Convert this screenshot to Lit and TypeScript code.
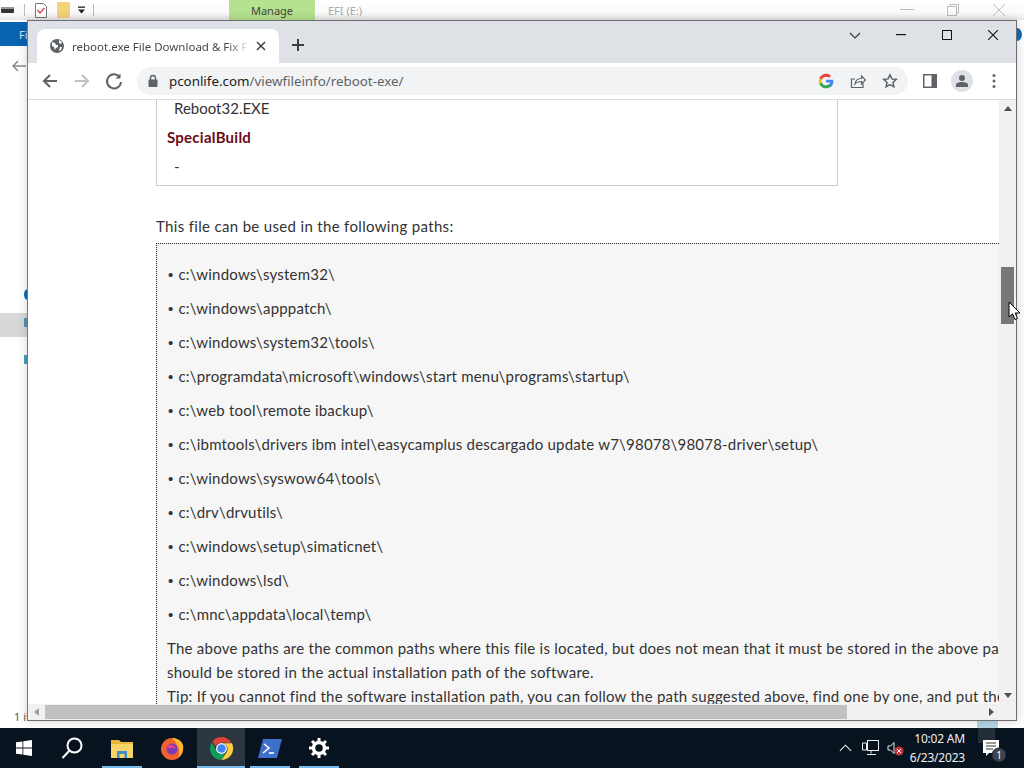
import { LitElement, html, css, svg } from "lit";
import { customElement } from "lit/decorators.js";

const PATHS = [
  "c:\\windows\\system32\\",
  "c:\\windows\\apppatch\\",
  "c:\\windows\\system32\\tools\\",
  "c:\\programdata\\microsoft\\windows\\start menu\\programs\\startup\\",
  "c:\\web tool\\remote ibackup\\",
  "c:\\ibmtools\\drivers ibm intel\\easycamplus descargado update w7\\98078\\98078-driver\\setup\\",
  "c:\\windows\\syswow64\\tools\\",
  "c:\\drv\\drvutils\\",
  "c:\\windows\\setup\\simaticnet\\",
  "c:\\windows\\lsd\\",
  "c:\\mnc\\appdata\\local\\temp\\",
];

@customElement("app-root")
export class AppRoot extends LitElement {
  static styles = css`
    :host { display: flex; flex-direction: column; width: 1024px; height: 768px; overflow: hidden; position: relative; background: #fff; font-family: "Lato", "Noto Sans", sans-serif; }
    svg { display: block; flex: none; }

    /* desktop: window behind */
    .desktop { flex: none; height: 728px; position: relative; background: #fff; }
    .back { position: absolute; inset: 0; background: #fff; font-family: "Noto Sans", sans-serif; }
    .back-title { height: 20px; display: flex; align-items: center; background: linear-gradient(#fff, #fafafa 70%, #e8e8e8); color: #9a9a9a; font-size: 11px; }
    .qa { display: flex; align-items: center; gap: 10px; width: 229px; padding-left: 1px; box-sizing: border-box; }
    .sep { width: 1px; height: 12px; background: #bbb; }
    .tight { margin-left: -2px; }
    .manage { width: 86px; height: 20px; background: #b5e28e; color: #444; display: flex; align-items: center; justify-content: center; }
    .efi { margin-left: 13px; flex: 1; color: #aaa; }
    .caps { display: flex; gap: 33px; padding-right: 18px; align-items: center; }
    .file { position: absolute; left: 0; top: 22px; width: 40px; height: 24px; background: #0a64b4; color: #cfe3f5; font-size: 11px; padding: 5px 0 0 19px; box-sizing: border-box; }
    .backarrow { position: absolute; left: 12px; top: 60px; }
    .sel { position: absolute; left: 0; top: 313px; width: 28px; height: 24px; background: #d8d8d8; }
    .dot { position: absolute; left: 24px; top: 289px; width: 8px; height: 11px; border-radius: 50%; background: #0f6cb5; }
    .sq { position: absolute; left: 24px; width: 6px; height: 9px; background: #5a8fb0; }
    .sq.a { top: 318px; }
    .sq.b { top: 355px; background: #4aa0b8; }
    .items { position: absolute; left: 14px; top: 709px; font-size: 11px; color: #555; }
    .rdot { position: absolute; left: 1012px; top: 28px; width: 10px; height: 13px; border-radius: 50%; background: #0f6cb5; }
    .tealbox { position: absolute; left: 977px; top: 720px; width: 21px; height: 8px; background: #b5d6e4; }

    /* chrome window */
    .win { position: absolute; left: 27px; top: 20px; width: 990px; height: 701px; box-sizing: border-box; border: 1px solid #6e6e6e; border-left-color: #777; display: flex; flex-direction: column; background: #fff; box-shadow: 0 0 10px rgba(0,0,0,.18); font-family: "Noto Sans", sans-serif; }
    .strip { flex: none; height: 42px; background: #dee1e6; display: flex; align-items: flex-end; padding-left: 9px; }
    .tab { width: 242px; height: 34px; background: #fff; border-radius: 8px 8px 0 0; display: flex; align-items: center; padding: 0 13px 0 12px; box-sizing: border-box; gap: 7px; }
    .tab-title { flex: 1; font-size: 11.5px; color: #45474a; white-space: nowrap; overflow: hidden; -webkit-mask-image: linear-gradient(to right, #000 88%, transparent); mask-image: linear-gradient(to right, #000 88%, transparent); }
    .newtab { margin: 0 0 12px 13px; }
    .winctl { margin-left: auto; align-self: flex-start; display: flex; align-items: center; height: 28px; }
    .wc { width: 46px; display: flex; justify-content: center; }
    .toolbar { flex: none; height: 36px; background: #fff; border-bottom: 1px solid #dadce0; display: flex; align-items: center; padding-left: 12px; }
    .nav { display: flex; gap: 12px; }
    .omni { margin-left: 13px; width: 771px; height: 28px; border-radius: 14px; background: #f1f3f4; display: flex; align-items: center; padding: 0 10px 0 10px; box-sizing: border-box; }
    .url { margin-left: 10px; font-size: 13.35px; color: #5f6368; flex: 1; white-space: nowrap; }
    .url b { font-weight: 400; color: #202124; }
    .omni-r { display: flex; align-items: center; gap: 16px; }
    .tool-r { display: flex; align-items: center; gap: 11px; margin-left: 15px; }
    .avatar { width: 22px; height: 22px; border-radius: 50%; background: #dee1e6; display: flex; align-items: center; justify-content: center; margin-left: 3px; }

    .view { flex: 1; min-height: 0; display: grid; grid-template-columns: 1fr 17px; grid-template-rows: 1fr 16px; }
    .page { overflow: hidden; background: #fff; padding-left: 128px; font-family: "Lato", "Noto Sans", sans-serif; font-size: 15px; letter-spacing: .25px; color: #333; min-width: 0; }
    .props { width: 682px; height: 86px; box-sizing: border-box; border: 1px solid #ccc; border-top: 0; padding-left: 10px; }
    .pv { height: 29px; line-height: 17px; padding-left: 7px; color: #333; letter-spacing: 0; }
    .pk { height: 29px; line-height: 17px; color: #6a0a14; font-weight: 700; }
    .used { margin: 29px 0 0; height: 28px; line-height: 22px; letter-spacing: .33px; }
    .list { border-top: 1px dotted #222; border-left: 1px dotted #222; background: #f6f6f6; padding: 13px 0 0 10px; white-space: nowrap; overflow: hidden; height: 461px; box-sizing: border-box; }
    .li { height: 34px; line-height: 34px; letter-spacing: .2px; }
    .li::before { content: "•"; font-family: "Liberation Sans", sans-serif; margin: 0 5px 0 1px; }
    .para { line-height: 24px; margin-top: 5px; }

    .vs { background: #f1f1f1; display: flex; flex-direction: column; align-items: center; }
    .hs { background: #f1f1f1; display: flex; align-items: center; padding: 0 2px; }
    .corner { background: #f1f1f1; }
    .arrow { width: 0; height: 0; border: 4px solid transparent; }
    .up { border-top: 0; border-bottom: 5px solid #505050; margin-top: 6px; }
    .down { border-bottom: 0; border-top: 5px solid #505050; margin-bottom: 6px; margin-top: auto; }
    .left { border-left: 0; border-right: 5px solid #a0a0a0; margin-left: 4px; }
    .right { border-right: 0; border-left: 5px solid #505050; margin-right: 3px; margin-left: auto; }
    .vthumb { width: 13px; height: 57px; background: #787878; margin-top: 156px; }
    .hthumb { width: 802px; height: 14px; background: #c1c1c1; margin-left: 6px; }
    .cursor { position: absolute; left: 1008px; top: 301px; }

    /* taskbar */
    .taskbar { flex: none; height: 40px; background: #07131f; display: flex; align-items: center; color: #fff; position: relative; }
    .tb { width: 48px; height: 40px; display: flex; align-items: center; justify-content: center; box-sizing: border-box; flex: none; position: relative; }
    .tb.on::after { content: ""; position: absolute; left: 4px; right: 4px; bottom: 0; height: 2px; background: #76b9ed; }
    .tb.act { background: #2b3641; }
    .tb.act::after { left: 0; right: 0; }
    .ex { margin-left: 2px; }
    .nx { margin-left: 1px; }
    .nx0 { margin-left: 2px; }
    .tray { margin-left: auto; display: flex; align-items: center; padding-right: 5px; position: relative; }
    .ghost { position: absolute; left: 978px; top: 0; width: 17px; height: 15px; background: #232e39; }
    .chev { margin-right: 2px; }
    .net { margin-left: 8px; }
    .vol { margin-left: 8px; }
    .clock { font-family: "Noto Sans", sans-serif; font-size: 12px; line-height: 19px; text-align: right; width: 61px; color: #f0f0f0; letter-spacing: -.2px; }
    .notif { width: 54px; display: flex; justify-content: center; position: relative; }
  `;

  private chromeIcon() {
    return svg`<svg width="25" height="25" viewBox="0 0 48 48">
      <path fill="#db4437" d="M24 2a22 22 0 0 1 19 11H24a11 11 0 0 0-10.5 7.5L6.6 10.5A22 22 0 0 1 24 2z"/>
      <path fill="#0f9d58" d="M5.5 12A22 22 0 0 0 24 46l9.5-16.5a11 11 0 0 1-19-0.5z"/>
      <path fill="#ffcd40" d="M44 14H25a11 11 0 0 1 9.5 16L24 46A22 22 0 0 0 44 14z"/>
      <circle cx="24" cy="24" r="10.5" fill="#fff"/><circle cx="24" cy="24" r="8.2" fill="#4285f4"/>
    </svg>`;
  }

  render() {
    return html`
      <div class="desktop">
        <div class="back">
          <div class="back-title">
            <div class="qa">
              <svg width="13" height="6" viewBox="0 0 13 6"><rect width="13" height="6" rx="1" fill="#333"/><rect y="0" width="13" height="2" fill="#999"/></svg>
              <span class="sep"></span>
              <svg width="12" height="15" viewBox="0 0 12 15"><path d="M.5 .5h8l3 3v11H.5z" fill="#fff" stroke="#777"/><path d="M2.500 7l2.500 3 4.500-5" fill="none" stroke="#d4454a" stroke-width="1.300"/></svg>
              <svg width="13" height="16" viewBox="0 0 13 16"><rect width="13" height="16" fill="#f4d27a"/></svg>
              <svg class="tight" width="7" height="8" viewBox="0 0 8 8"><rect width="8" height="1.500" fill="#222"/><path d="M0 3.500h8L4 8z" fill="#222"/></svg>
              <span class="sep tight"></span>
            </div>
            <div class="manage">Manage</div>
            <div class="efi">EFI (E:)</div>
            <div class="caps">
              <svg width="14" height="2" viewBox="0 0 14 2"><rect width="14" height="1" fill="#bbb"/></svg>
              <svg width="12" height="12" viewBox="0 0 12 12" fill="none" stroke="#bbb"><rect x=".5" y="2.500" width="9" height="9"/><path d="M3 2.500V.5h8.500V9H9.500"/></svg>
              <svg width="14" height="14" viewBox="0 0 14 14" stroke="#bbb"><path d="M1 1l12 12M13 1L1 13"/></svg>
            </div>
          </div>
          <div class="file">Fi</div>
          <svg class="backarrow" width="14" height="12" viewBox="0 0 14 12" fill="none" stroke="#888" stroke-width="1.500"><path d="M14 6H1M6 1L1 6l5 5"/></svg>
          <div class="sel"></div>
          <div class="dot"></div>
          <div class="sq a"></div>
          <div class="sq b"></div>
          <div class="items">1 it</div>
          <div class="rdot"></div>
          <div class="tealbox"></div>
        </div>

        <div class="win">
          <div class="strip">
            <div class="tab">
              <svg width="16" height="16" viewBox="0 0 16 16"><circle cx="8" cy="8" r="7" fill="#5f6368"/><path d="M3 4l3 1 1 2 2 0 0 2-2 1-1 2-1-3-2-1zM10 2l3 2-1 2-2-1zM11 9l2 0-1 3-2 1z" fill="#fff"/></svg>
              <div class="tab-title">reboot.exe File Download &amp; Fix File</div>
              <svg width="10" height="10" viewBox="0 0 10 10" stroke="#3c4043" stroke-width="1.500"><path d="M1 1l8 8M9 1l-8 8"/></svg>
            </div>
            <svg class="newtab" width="12" height="12" viewBox="0 0 12 12" stroke="#3c4043" stroke-width="2"><path d="M6 0v12M0 6h12"/></svg>
            <div class="winctl">
              <div class="wc"><svg width="12" height="7" viewBox="0 0 12 7" fill="none" stroke="#333" stroke-width="1.100"><path d="M1 1l5 5 5-5"/></svg></div>
              <div class="wc"><svg width="10" height="2" viewBox="0 0 10 2"><rect width="10" height="1.200" fill="#111"/></svg></div>
              <div class="wc"><svg width="10" height="10" viewBox="0 0 10 10" fill="none" stroke="#111"><rect x=".5" y=".5" width="9" height="9"/></svg></div>
              <div class="wc"><svg width="10" height="10" viewBox="0 0 10 10" stroke="#111" stroke-width="1.100"><path d="M0 0l10 10M10 0L0 10"/></svg></div>
            </div>
          </div>
          <div class="toolbar">
            <div class="nav">
              <svg width="20" height="20" viewBox="0 0 20 20" fill="none" stroke="#5f6368" stroke-width="2"><path d="M17 10H4M10 4l-6 6 6 6"/></svg>
              <svg width="20" height="20" viewBox="0 0 20 20" fill="none" stroke="#bfc1c4" stroke-width="2"><path d="M3 10h13M10 4l6 6-6 6"/></svg>
              <svg width="20" height="20" viewBox="0 0 20 20" fill="none" stroke="#5f6368" stroke-width="2"><path d="M15.500 6A7 7 0 1 0 17 11"/><path d="M16.500 2.500V7.500H11.500" fill="#5f6368" stroke="none"/></svg>
            </div>
            <div class="omni">
              <svg width="12" height="14" viewBox="0 0 12 14"><rect x="1.500" y="5.500" width="9" height="7.500" rx="1" fill="#5f6368"/><path d="M3.500 6V4a2.500 2.500 0 0 1 5 0v2" fill="none" stroke="#5f6368" stroke-width="1.400"/></svg>
              <div class="url"><b>pconlife.com</b>/viewfileinfo/reboot-exe/</div>
              <div class="omni-r">
                <svg width="16" height="16" viewBox="0 0 48 48"><path fill="#4285f4" d="M46 24.500c0-1.600-.1-3.100-.4-4.500H24v8.500h12.400c-.5 2.900-2.200 5.300-4.600 7v5.700h7.400C43.500 37.700 46 31.700 46 24.500z"/><path fill="#34a853" d="M24 46c6.200 0 11.400-2 15.200-5.500l-7.400-5.700c-2 1.400-4.700 2.200-7.800 2.200-6 0-11-4-12.800-9.500H4.500v5.900C8.200 40.800 15.600 46 24 46z"/><path fill="#fbbc05" d="M11.200 27.500a13 13 0 0 1 0-7v-5.900H4.500a22 22 0 0 0 0 18.800z"/><path fill="#ea4335" d="M24 11c3.400 0 6.400 1.200 8.800 3.400l6.500-6.500C35.400 4.300 30.200 2 24 2 15.600 2 8.200 7.200 4.500 14.600l6.700 5.900C13 15 18 11 24 11z"/></svg>
                <svg width="16" height="16" viewBox="0 0 16 16" fill="none" stroke="#5f6368" stroke-width="1.200"><path d="M13 10v4.500H1.500V6H5"/><path d="M5 11c.5-4 3-5.500 6.500-5.500V3L15.500 7l-4 4V8.500C8.500 8.500 6.500 9 5 11z"/></svg>
                <svg width="16" height="16" viewBox="0 0 16 16" fill="none" stroke="#5f6368" stroke-width="1.500"><path d="M8 1.800l1.900 4.100 4.400.5-3.300 3 .9 4.400L8 11.600l-3.900 2.200.9-4.400-3.300-3 4.400-.5z"/></svg>
              </div>
            </div>
            <div class="tool-r">
              <svg width="14" height="14" viewBox="0 0 14 14"><rect width="14" height="14" fill="#5f6368"/><rect x="1.500" y="1.500" width="7" height="11" fill="#fff"/></svg>
              <div class="avatar"><svg width="12" height="12" viewBox="0 0 12 12" fill="#5f6368"><circle cx="6" cy="3" r="3"/><path d="M0 12V9.500C0 8 3 7 6 7s6 1 6 2.500V12z"/></svg></div>
              <svg width="20" height="16" viewBox="0 0 20 16" fill="#5f6368"><circle cx="10" cy="2.500" r="1.500"/><circle cx="10" cy="8" r="1.500"/><circle cx="10" cy="13.500" r="1.500"/></svg>
            </div>
          </div>
          <div class="view">
            <div class="page">
              <div class="props">
                <div class="pv">Reboot32.EXE</div>
                <div class="pk">SpecialBuild</div>
                <div class="pv">-</div>
              </div>
              <div class="used">This file can be used in the following paths:</div>
              <div class="list">
                ${PATHS.map((p) => html`<div class="li">${p}</div>`)}
                <div class="para">The above paths are the common paths where this file is located, but does not mean that it must be stored in the above paths. It<br>should be stored in the actual installation path of the software.<br>Tip: If you cannot find the software installation path, you can follow the path suggested above, find one by one, and put the file</div>
              </div>
            </div>
            <div class="vs">
              <div class="arrow up"></div>
              <div class="vthumb"></div>
              <div class="arrow down"></div>
            </div>
            <div class="hs">
              <div class="arrow left"></div>
              <div class="hthumb"></div>
              <div class="arrow right"></div>
            </div>
            <div class="corner"></div>
          </div>
        </div>
        <svg class="cursor" width="13" height="20" viewBox="0 0 13 20"><path d="M1 1v15l3.500-3.200L7 18.500l2.500-1L7.200 12H12z" fill="#fff" stroke="#000"/></svg>
      </div>

      <div class="taskbar">
        <div class="ghost"></div>
        <div class="tb"><svg width="16" height="16" viewBox="0 0 16 16" fill="#fff"><path d="M0 2.300l6.500-.9v6.200H0zM7.300 1.300L16 0v7.600H7.300zM0 8.400h6.500v6.200L0 13.700zM7.300 8.400H16V16l-8.700-1.300z"/></svg></div>
        <div class="tb"><svg width="22" height="22" viewBox="0 0 22 22" fill="none" stroke="#fff" stroke-width="2"><circle cx="13.500" cy="8.500" r="7"/><path d="M8.500 13.500L1.500 21"/></svg></div>
        <div class="tb on ex"><svg width="22" height="19" viewBox="0 0 22 19"><path d="M0 1h8l2 2h12v4H0z" fill="#e8b83a"/><rect y="5" width="22" height="14" fill="#f6d469"/><rect x="6" y="12" width="10" height="7" fill="#3f8fc4"/><rect x="8.500" y="15" width="5" height="4" fill="#f6d469"/></svg></div>
        <div class="tb nx0"><svg width="24" height="24" viewBox="0 0 24 24"><circle cx="12" cy="13" r="11" fill="#f2602c"/><path d="M12 2c5 0 9 2 11 7 1 5-1 10-5 13 3-6 1-12-6-20z" fill="#ffb52e"/><circle cx="12" cy="13" r="5.500" fill="#7b3ab8"/><path d="M7 10c3-2 8-1 9 3-2-2-5-1-6 0z" fill="#e8488a"/></svg></div>
        <div class="tb on act nx">${this.chromeIcon()}</div>
        <div class="tb on nx"><svg width="24" height="19" viewBox="0 0 24 19"><path d="M5 0h19l-5 19H0z" fill="#3f6fc9"/><path d="M6 5l5 4-6 5" fill="none" stroke="#fff" stroke-width="1.600"/><path d="M11 14h5" stroke="#fff" stroke-width="1.600"/></svg></div>
        <div class="tb on nx"><svg width="20" height="20" viewBox="0 0 20 20"><circle cx="10" cy="10" r="5.500" fill="none" stroke="#fff" stroke-width="3.500"/><path d="M10 0v4M10 16v4M0 10h4M16 10h4M3 3l3 3M14 14l3 3M17 3l-3 3M6 14l-3 3" stroke="#fff" stroke-width="3"/></svg></div>
        <div class="tray">
          <svg class="chev" width="13" height="8" viewBox="0 0 14 8" fill="none" stroke="#eee" stroke-width="1.200"><path d="M1 7l6-6 6 6"/></svg>
          <svg class="net" width="17" height="16" viewBox="0 0 17 16" fill="none" stroke="#eee"><rect x="5.500" y=".5" width="11" height="10"/><path d="M9 10.500v3M5 14.500h9M.5 3h4v7h-4z"/></svg>
          <svg class="vol" width="17" height="15" viewBox="0 0 17 15"><path d="M1 5h2.500L7 1.500v11L3.500 9H1z" fill="none" stroke="#eee"/><circle cx="12" cy="10" r="4.500" fill="#c8323c"/><path d="M10 8l4 4M14 8l-4 4" stroke="#fff"/></svg>
          <div class="clock">10:02 AM<br>6/23/2023</div>
          <div class="notif"><svg width="28" height="28" viewBox="0 0 28 28"><path d="M5 6h16v13H11l-3 3v-3H5z" fill="#fff"/><path d="M8 9h10M8 12h10M8 15h7" stroke="#333"/><circle cx="21" cy="21" r="7" fill="#3c4650" stroke="#1c232b"/><text x="21" y="25" font-size="10" fill="#fff" text-anchor="middle" font-family="Noto Sans, sans-serif">1</text></svg></div>
        </div>
      </div>
    `;
  }
}
